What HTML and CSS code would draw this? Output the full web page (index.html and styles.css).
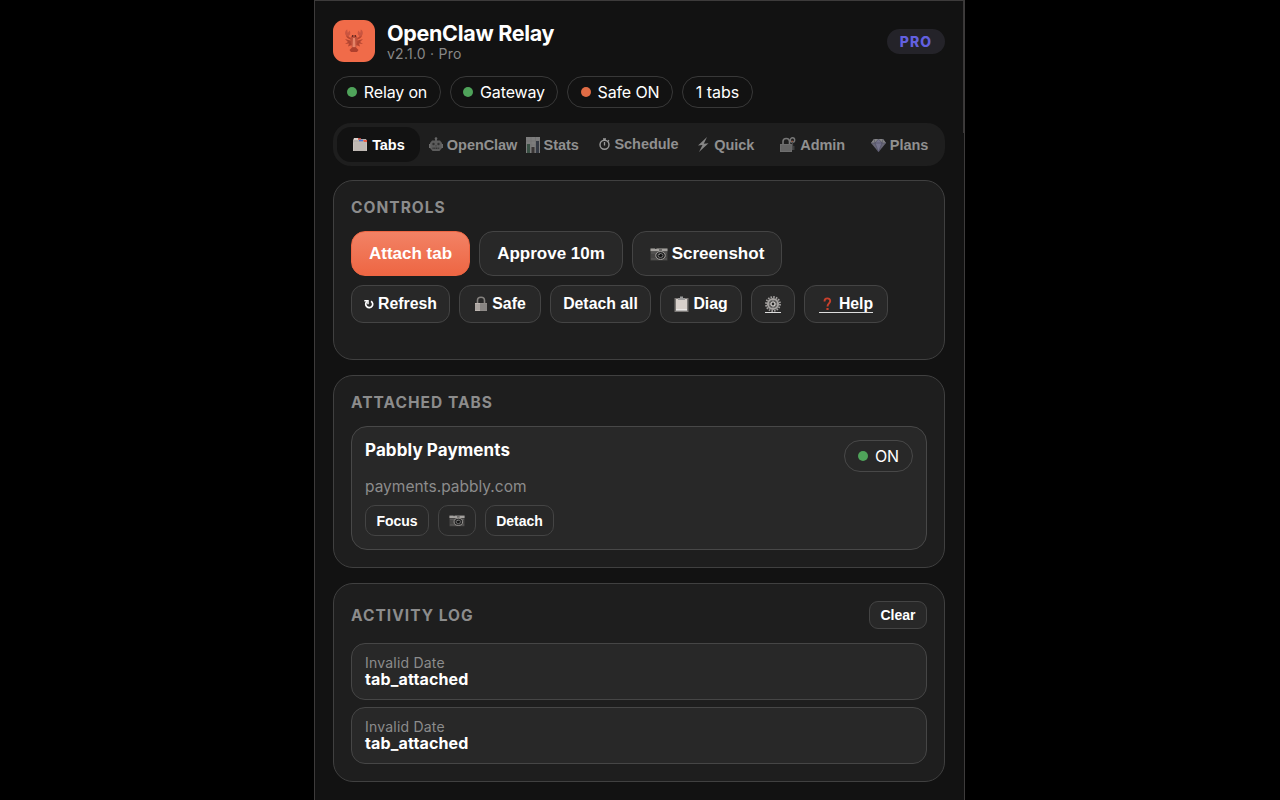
FILE: index.html
```html
<!DOCTYPE html>
<html lang="en">
<head>
    <meta charset="UTF-8">
    <meta name="viewport" content="width=device-width, initial-scale=1.0">
    <title>OpenClaw Relay</title>
    <link rel="stylesheet" href="styles.css">
</head>
<body>
    <!-- Shared icons -->
    <svg class="sprite" aria-hidden="true">
        <symbol id="i-camera" viewBox="0 0 18 14">
            <path d="M0.500 1.500h17v12H.5z" fill="#454443"/>
            <path d="M.5 1.500h17v2.700H.5z" fill="#a5a29f"/>
            <path d="M5 1.500h1.500M9 3h3" stroke="#333" stroke-width="1"/>
            <path d="M1 6h16M1 12h16" stroke="#696969" stroke-width=".7"/>
            <ellipse cx="10.500" cy="8.500" rx="4.800" ry="4" fill="#252525" stroke="#a09d9a" stroke-width="1"/>
            <ellipse cx="10.500" cy="8.500" rx="2.400" ry="2" fill="#111" stroke="#777" stroke-width=".9"/>
            <path d="M9.300 7.700l1-1" stroke="#ccc" stroke-width=".7"/>
        </symbol>
    </svg>

    <div class="popup">
        <div class="scrollbar"></div>

        <div class="header">
            <div class="logo">
                <svg width="20" height="24" viewBox="0 0 20 24">
                    <path d="M7.500 10C4 9 2.500 7.500 3 5M12.500 10c3.500-1 5-2.500 4.500-5" fill="none" stroke="#b5452f" stroke-width="1.800"/>
                    <path d="M3.400 7.500C0 6 .8 1.500 3.200.5L3.800 4 5.500 1.500c1.500 2.500 1 5-2.100 6zM16.600 7.500C20 6 19.200 1.500 16.800.5L16.200 4 14.500 1.500c-1.500 2.500-1 5 2.100 6z" fill="#c95540"/>
                    <path d="M1 10l7 2 2 2 2-2 7-2-3 3 3 2-4-.5 1 3-5-2h-2l-5 2 1-3-4 .5 3-2z" fill="#b24530"/>
                    <path d="M10 6c3 0 4 3 3.500 6L12 19H8L6.500 12C6 9 7 6 10 6z" fill="#c0503a"/>
                    <path d="M9 9h2l.5 9h-3z" fill="#e58468"/>
                    <path d="M8 18.500h4l2.500 2.500-1.500 2H7l-1.500-2z" fill="#ae402d"/>
                    <path d="M8 7h1.200M10.800 7H12" stroke="#4d201b" stroke-width="1.300"/>
                </svg>
            </div>
            <div class="brand">
                <h1>OpenClaw Relay</h1>
                <p>v2.1.0 · Pro</p>
            </div>
            <div class="plan-badge">PRO</div>
        </div>

        <div class="chips">
            <div class="chip relay"><span class="dot"></span>Relay on</div>
            <div class="chip gateway"><span class="dot"></span>Gateway</div>
            <div class="chip safe"><span class="dot orange"></span>Safe ON</div>
            <div class="chip count">1 tabs</div>
        </div>

        <div class="nav">
            <button class="nav-item active">
                <svg width="16" height="15" viewBox="0 0 16 15">
                    <path d="M1 3l1-2h4l1 1h7l1 2v10H1z" fill="#b8b1ac"/>
                    <path d="M2 2h4" stroke="#e7e0dc" stroke-width="1.5"/>
                    <path d="M6 2h3" stroke="#e95d49" stroke-width="1.500"/>
                    <path d="M7 3.500h4" stroke="#4b6fd0" stroke-width="1.500"/>
                    <path d="M11 3h4v2h-3z" fill="#e95d49"/>
                    <path d="M1 5.500h14V14H1z" fill="#c9c2bd"/>
                    <path d="M2 7h12M2 9h12M2 11h12M2 13h12" stroke="#aaa39f" stroke-width=".6"/>
                </svg>
                <span>Tabs</span>
            </button>
            <button class="nav-item overflow">
                <svg width="14" height="15" viewBox="0 0 14 15">
                    <path d="M7 1v3" stroke="#707070" stroke-width="1.500"/>
                    <circle cx="7" cy="1.600" r="1.300" fill="#666"/>
                    <path d="M3 3.500h8l2 2.500v5l-2.500 3h-7L1 11V6z" fill="#5c5c5c"/>
                    <path d="M0 7h1.500v4H0zM12.500 7H14v4h-1.500z" fill="#6b6b6b"/>
                    <circle cx="4.500" cy="7" r="1.200" fill="#303030"/>
                    <circle cx="9.500" cy="7" r="1.200" fill="#303030"/>
                    <path d="M6.200 9.300L7 8l.8 1.300z" fill="#333"/>
                    <path d="M3.500 11.300h7" stroke="#333" stroke-width="1.500" stroke-dasharray="1.200 .5"/>
                </svg>
                <span>OpenClaw</span>
            </button>
            <button class="nav-item">
                <svg width="14" height="16" viewBox="0 0 14 16">
                    <path d="M0 0h14v16H0z" fill="#7d7d7d"/>
                    <path d="M0 4h14M0 8h14M0 12h14M5 0v16M9.500 0v16" stroke="#6d6d6d" stroke-width=".5"/>
                    <path d="M1 7h3v9H1z" fill="#395044"/>
                    <path d="M5.500 10h3v6h-3z" fill="#393535"/>
                    <path d="M10 4h3v12h-3z" fill="#343943"/>
                </svg>
                <span>Stats</span>
            </button>
            <button class="nav-item raised">
                <svg width="11" height="12" viewBox="0 0 11 12">
                    <circle cx="5.500" cy="6.700" r="4.500" fill="none" stroke="#999" stroke-width="1.400"/>
                    <path d="M4 1h3M5.500 1v2M5.500 4v3.500M9 2.200l1 1" stroke="#999" stroke-width="1.300"/>
                </svg>
                <span>Schedule</span>
            </button>
            <button class="nav-item">
                <svg width="13" height="15" viewBox="0 0 13 15">
                    <path d="M10 0L1 8.500l4.500-.4L2 15l9.500-8.700-4.700.5z" fill="#858585"/>
                </svg>
                <span>Quick</span>
            </button>
            <button class="nav-item">
                <svg width="16" height="15" viewBox="0 0 16 15">
                    <path d="M3 7V4.500C3 .5 9.500.5 9.500 4.500V7" fill="none" stroke="#777" stroke-width="1.600"/>
                    <path d="M0 7h12v8H0z" fill="#6e6e6e"/>
                    <path d="M1 9h10M1 11h10M1 13h10" stroke="#535353" stroke-width=".6"/>
                    <circle cx="12.500" cy="3" r="2.200" fill="none" stroke="#777" stroke-width="1.400"/>
                    <path d="M12.500 5v8M12.500 10h2M12.500 12h2" stroke="#4a4a4a" stroke-width="1.300"/>
                    <circle cx="12.200" cy="4.200" r=".8" fill="#a5573b"/>
                </svg>
                <span>Admin</span>
            </button>
            <button class="nav-item">
                <svg width="15" height="14" viewBox="0 0 15 14">
                    <path d="M3 1h9l3 4-7.500 9L0 5z" fill="#686775"/>
                    <path d="M3 1h9l3 4H0z" fill="#858585"/>
                    <path d="M4 5l3.500-4L11 5l-3.500 9z" fill="#74738b"/>
                    <path d="M0 5h15M4 5l3.500 9L11 5M3 1l1 4 3.500-4L11 5l1-4" fill="none" stroke="#4d4d61" stroke-width=".6"/>
                </svg>
                <span>Plans</span>
            </button>
        </div>

        <div class="card controls">
            <h2>Controls</h2>
            <div class="row">
                <button class="btn primary w-attach">Attach tab</button>
                <button class="btn w-approve">Approve 10m</button>
                <button class="btn w-shot"><svg width="18" height="14"><use href="#i-camera"/></svg><span>Screenshot</span></button>
            </div>
            <div class="row">
                <button class="btn small w-refresh">
                    <svg width="10" height="10" viewBox="0 0 10 10">
                        <path d="M7 2.200A3.500 3.500 0 1 1 3 2.500" fill="none" stroke="#fff" stroke-width="1.700"/>
                        <path d="M.3 1.800h3.700v3.400" fill="none" stroke="#fff" stroke-width="1.500"/>
                    </svg>
                    <span>Refresh</span>
                </button>
                <button class="btn small w-safe">
                    <svg width="14" height="16" viewBox="0 0 14 16">
                        <path d="M3.500 8V4.500C3.500.2 10.500.2 10.500 4.500V8" fill="none" stroke="#85827f" stroke-width="1.600"/>
                        <path d="M1 7h12v8H1z" fill="#8f8b88"/>
                        <path d="M1 7h5v8H1z" fill="#bdb5b0"/>
                        <path d="M1 9h12M1 11h12M1 13h12" stroke="#777" stroke-width=".5"/>
                    </svg>
                    <span>Safe</span>
                </button>
                <button class="btn small w-all">Detach all</button>
                <button class="btn small w-diag">
                    <svg width="15" height="16" viewBox="0 0 15 16">
                        <path d="M.5 2h14v14H.5z" fill="#7a7775"/>
                        <path d="M2 3h11v11H2z" fill="#d8d0cb"/>
                        <path d="M4 2h2V.5h3V2h2v2H4z" fill="#999"/>
                        <path d="M2 14h11" stroke="#fff"/>
                    </svg>
                    <span>Diag</span>
                </button>
                <button class="btn small w-gear">
                    <span class="underlined">
                        <svg width="16" height="16" viewBox="0 0 16 16">
                            <circle cx="8" cy="8" r="7" fill="none" stroke="#a3a09f" stroke-width="1.800" stroke-dasharray="1.600 1.149"/>
                            <circle cx="8" cy="8" r="5.100" fill="#5a5958" stroke="#a5a2a0" stroke-width="2"/>
                            <path d="M8 4v8M4 8h8" stroke="#8c8a88" stroke-width="1"/>
                            <circle cx="8" cy="8" r="2" fill="#262626" stroke="#d0ccc9" stroke-width="1.200"/>
                        </svg>
                    </span>
                </button>
                <button class="btn small w-help">
                    <span class="underlined">
                        <svg width="20" height="14" viewBox="0 0 20 14">
                            <path d="M5.500 4.500C5.500.4 11.200.4 11.200 4 11.200 6.300 8.500 6.500 8.500 9.500" fill="none" stroke="#c8402c" stroke-width="1.900"/>
                            <path d="M7.400 11h2.200v2H7.400z" fill="#c8402c"/>
                        </svg>
                        <span>Help</span>
                    </span>
                </button>
            </div>
        </div>

        <div class="card attached">
            <h2>Attached Tabs</h2>
            <div class="tab-item">
                <div class="tab-top">
                    <div class="tab-title">Pabbly Payments</div>
                    <div class="chip on"><span class="dot"></span>ON</div>
                </div>
                <div class="tab-url">payments.pabbly.com</div>
                <div class="row">
                    <button class="btn tiny w-focus">Focus</button>
                    <button class="btn tiny w-cam"><svg width="16" height="13"><use href="#i-camera"/></svg></button>
                    <button class="btn tiny w-detach">Detach</button>
                </div>
            </div>
        </div>

        <div class="card activity">
            <div class="card-head">
                <h2>Activity Log</h2>
                <button class="btn tiny w-clear">Clear</button>
            </div>
            <div class="log-item">
                <div class="log-date">Invalid Date</div>
                <div class="log-text">tab_attached</div>
            </div>
            <div class="log-item">
                <div class="log-date">Invalid Date</div>
                <div class="log-text">tab_attached</div>
            </div>
        </div>
    </div>
</body>
</html>
```
FILE: styles.css
```css
* {
    margin: 0;
    padding: 0;
    box-sizing: border-box;
}

body {
    font-family: Inter, sans-serif;
    background: #000;
    color: #fff;
    height: 800px;
    overflow: hidden;
}

.sprite {
    position: absolute;
    width: 0;
    height: 0;
}

.popup {
    position: relative;
    width: 651px;
    height: 800px;
    margin-left: 314px;
    padding: 19px 19px 0 18px;
    background: #121212;
    border: 1px solid #3d3b3b;
    border-bottom: none;
    overflow: hidden;
}

.scrollbar {
    position: absolute;
    top: 0;
    right: 0;
    width: 1px;
    height: 132px;
    background: #3a3838;
}

.header {
    display: flex;
    align-items: center;
    height: 42px;
}

.logo {
    display: flex;
    align-items: center;
    justify-content: center;
    width: 42px;
    height: 42px;
    border-radius: 11px;
    background: #f06b49;
}

.brand {
    flex: 1;
    margin-left: 12px;
}

.brand h1 {
    font-size: 21.5px;
    line-height: 24px;
    font-weight: 700;
    letter-spacing: -0.3px;
    margin-top: 1px;
}

.brand p {
    font-size: 14px;
    line-height: 17px;
    letter-spacing: 0.25px;
    color: #888;
}

.plan-badge {
    width: 58px;
    height: 25px;
    border-radius: 13px;
    background: #242329;
    color: #6260df;
    font-size: 14px;
    font-weight: 800;
    line-height: 25px;
    letter-spacing: 1.1px;
    text-align: center;
}

.chips {
    display: flex;
    gap: 9px;
    margin-top: 14px;
}

.chip {
    display: flex;
    align-items: center;
    justify-content: center;
    gap: 7px;
    height: 32px;
    border: 1px solid #383838;
    border-radius: 17px;
    font-size: 16px;
    letter-spacing: -0.15px;
    white-space: nowrap;
}

.relay,
.gateway {
    width: 108px;
}

.safe {
    width: 106px;
}

.count {
    width: 71px;
    letter-spacing: 0;
}

.on {
    width: 69px;
    border-color: #484848;
}

.dot {
    width: 10px;
    height: 10px;
    border-radius: 50%;
    background: #4fa35a;
}

.dot.orange {
    background: #e06c45;
}

.nav {
    display: grid;
    grid-template-columns: repeat(7, 1fr);
    gap: 4px;
    height: 43px;
    margin-top: 15px;
    padding: 4px;
    border-radius: 18px;
    background: #1e1e1e;
}

.nav-item {
    display: flex;
    align-items: center;
    justify-content: center;
    gap: 4px;
    min-width: 0;
    border: none;
    border-radius: 14px;
    background: none;
    color: #909090;
    font: bold 14.5px "Liberation Sans", Arial, sans-serif;
    letter-spacing: -0.05px;
    white-space: nowrap;
}

.nav-item svg,
.btn svg {
    flex: none;
}

.nav-item.active {
    background: #121212;
    color: #fff;
}

.nav-item.overflow {
    justify-content: flex-start;
    padding-left: 5px;
}

.nav-item.raised {
    padding-bottom: 2px;
}

.card {
    margin-top: 15px;
    padding: 17px 17px 0;
    border: 1px solid #404040;
    border-radius: 20px;
    background: #1e1e1e;
}

.card h2 {
    font-size: 15.5px;
    line-height: 19px;
    font-weight: 700;
    letter-spacing: 1.02px;
    text-transform: uppercase;
    color: #8c8c8c;
}

.controls {
    height: 180px;
    margin-top: 14px;
}

.row {
    display: flex;
    gap: 9px;
}

.controls .row {
    margin-top: 9px;
}

.controls h2 + .row {
    margin-top: 14px;
}

.btn {
    display: flex;
    align-items: center;
    justify-content: center;
    gap: 4px;
    height: 45px;
    border: 1px solid #444;
    border-radius: 14px;
    background: #282828;
    color: #fff;
    font: bold 17px "Liberation Sans", Arial, sans-serif;
    white-space: nowrap;
}

.btn.primary {
    border-color: #ee6643;
    background: linear-gradient(#f28265, #ee6643);
}

.btn.small {
    height: 38px;
    border-radius: 12px;
    font-size: 15.8px;
}

.btn.tiny {
    height: 31px;
    border-radius: 10px;
    font-size: 14px;
}

.w-attach { width: 119px; }
.w-approve { width: 144px; }
.w-shot { width: 150px; }
.w-refresh { width: 99px; }
.w-safe { width: 82px; }
.w-all { width: 101px; }
.w-diag { width: 82px; }
.w-gear { width: 44px; }
.w-help { width: 84px; }
.w-focus { width: 64px; }
.w-cam { width: 38px; }
.w-detach { width: 69px; }

.underlined {
    display: flex;
    align-items: center;
    height: 17px;
    border-bottom: 1px solid #ddd;
}

.attached {
    height: 193px;
}

.tab-item {
    height: 124px;
    margin-top: 14px;
    padding: 13px;
    border: 1px solid #484848;
    border-radius: 16px;
    background: #282828;
}

.tab-top {
    display: flex;
    justify-content: space-between;
}

.tab-title {
    font-size: 17px;
    line-height: 21px;
    font-weight: 700;
    letter-spacing: 0.1px;
}

.tab-url {
    margin: 5px 0 8px;
    font-size: 15.5px;
    line-height: 20px;
    color: #8c8c8c;
}

.activity {
    height: 199px;
    padding-top: 17px;
}

.card-head {
    display: flex;
    align-items: center;
    justify-content: space-between;
    margin-bottom: 14px;
}

.btn.w-clear {
    width: 58px;
    height: 28px;
    border-radius: 9px;
}

.log-item {
    height: 57px;
    margin-bottom: 7px;
    padding: 10px 13px;
    border: 1px solid #464646;
    border-radius: 14px;
    background: #282828;
}

.log-date {
    font-size: 14px;
    line-height: 17px;
    letter-spacing: 0.2px;
    color: #8c8c8c;
}

.log-text {
    font-size: 16px;
    line-height: 17px;
    font-weight: 700;
    letter-spacing: 0.15px;
}
```
